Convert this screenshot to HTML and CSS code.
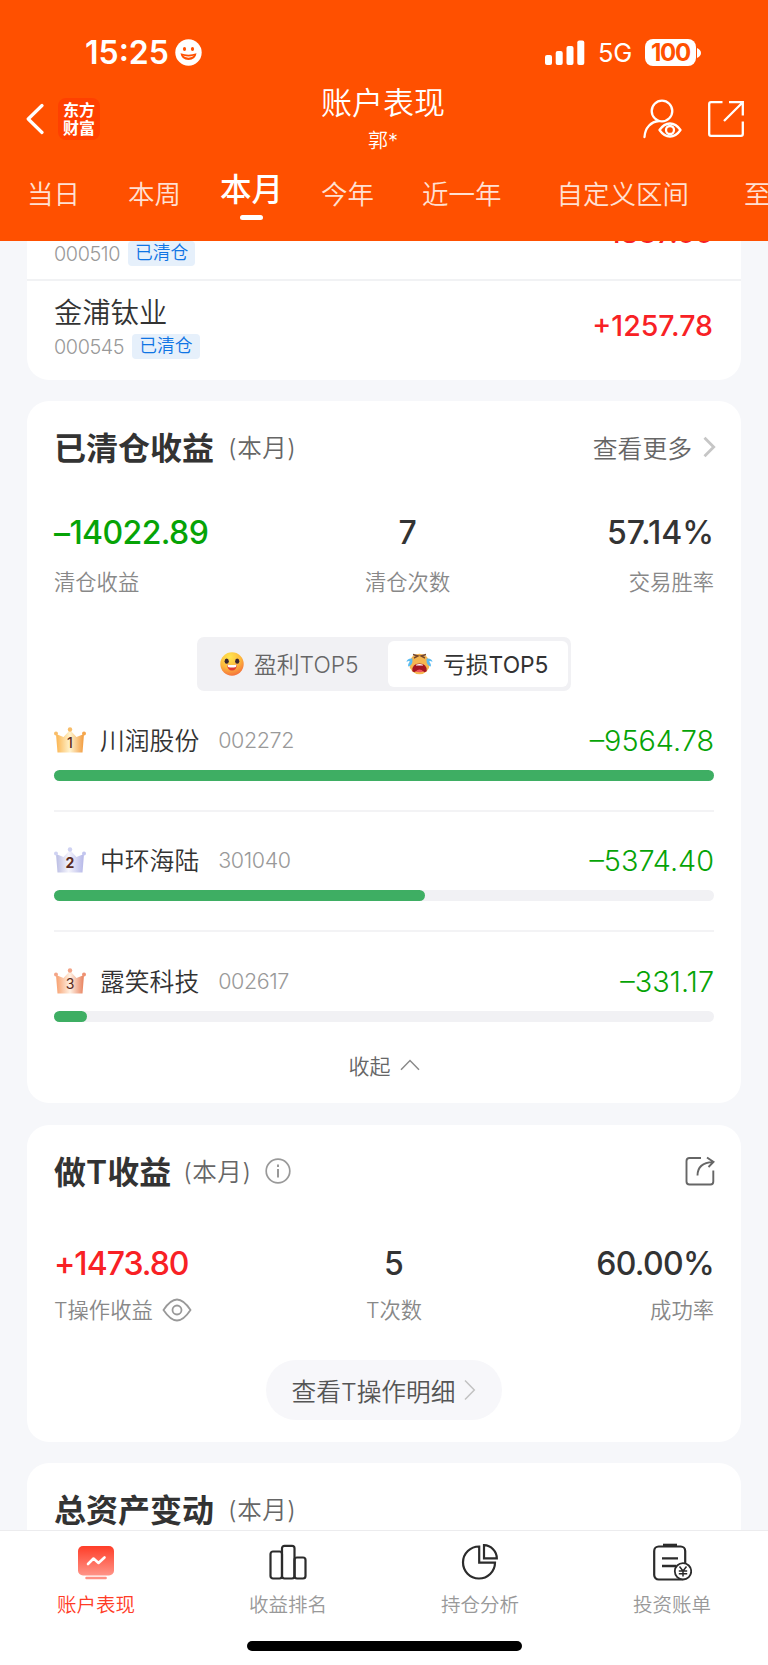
FILE: index.html
```html
<!DOCTYPE html>
<html lang="zh-CN">
<head>
    <meta charset="UTF-8">
    <meta name="viewport" content="width=device-width, initial-scale=1.0">
    <title>账户表现</title>
    <link rel="stylesheet" href="styles.css">
</head>
<body>

    <header class="header">
        <div class="status-bar">
            <div class="status-left">
                <span class="time">15:25</span>
                <svg width="27" height="27" viewBox="0 0 27 27">
                    <circle cx="13.5" cy="13.5" r="13.2" fill="#fff"/>
                    <ellipse cx="9.5" cy="10" rx="1.6" ry="2.1" fill="#ff5000"/>
                    <ellipse cx="17.5" cy="10" rx="1.6" ry="2.1" fill="#ff5000"/>
                    <path d="M5.5 14.3Q13.5 17 21.5 14.3Q20.5 21 13.5 21Q6.5 21 5.5 14.3Z" fill="#ff5000"/>
                    <path d="M8 16.6Q13.5 18.3 19 16.6Q17.5 18.7 13.5 18.7Q9.5 18.7 8 16.6Z" fill="#fff"/>
                </svg>
            </div>
            <div class="status-right">
                <svg width="40" height="26" viewBox="0 0 40 26" fill="#fff">
                    <rect x="0" y="15" width="7" height="10" rx="2"/>
                    <rect x="10.7" y="11" width="7" height="14" rx="2"/>
                    <rect x="21.5" y="6" width="7" height="19" rx="2"/>
                    <rect x="32.3" y="0.5" width="7" height="24.5" rx="2"/>
                </svg>
                <span class="network">5G</span>
                <span class="battery">100</span>
                <svg width="4" height="10" viewBox="0 0 4 10"><path d="M0 0Q4 2 4 5Q4 8 0 10Z" fill="#fff"/></svg>
            </div>
        </div>

        <div class="nav">
            <div class="nav-left">
                <svg width="18" height="32" viewBox="0 0 18 32" fill="none" stroke="#fff" stroke-width="3.2" stroke-linecap="round" stroke-linejoin="round"><path d="M16 2.5L2.2 16L16 29.5"/></svg>
                <span class="logo">东方<br>财富</span>
            </div>
            <div class="nav-title">
                <h1>账户表现</h1>
                <p>郭*</p>
            </div>
            <div class="nav-right">
                <svg width="40" height="40" viewBox="0 0 40 40" fill="none" stroke="#fff" stroke-width="2.3" stroke-linecap="round" stroke-linejoin="round">
                    <circle cx="20" cy="12" r="10.3"/>
                    <path d="M2.5 38C3 29 9 22.5 17 22"/>
                    <path d="M17.500 31Q22 24.500 28 24.500Q34 24.500 38.500 31Q34 37.500 28 37.500Q22 37.500 17.500 31Z"/>
                    <circle cx="28" cy="31" r="4"/>
                </svg>
                <svg width="38" height="38" viewBox="0 0 38 38" fill="none" stroke="#fff" stroke-width="2.3">
                    <path d="M15.500 2.200H4Q2.200 2.200 2.200 4V34Q2.200 35.800 4 35.800H34Q35.800 35.800 35.800 34V21.500"/>
                    <path d="M22 2.200H35.800V15.500M35.300 2.700L17 21"/>
                </svg>
            </div>
        </div>

        <nav class="tabs">
            <span>当日</span>
            <span>本周</span>
            <span class="active">本月</span>
            <span>今年</span>
            <span>近一年</span>
            <span class="wide">自定义区间</span>
            <span class="wide">至</span>
        </nav>
    </header>

    <main class="content">
        <section class="card stock-list">
            <div class="stock">
                <div>
                    <div class="stock-name"></div>
                    <div class="stock-meta"><span class="code">000510</span><span class="tag">已清仓</span></div>
                </div>
                <span class="stock-value">+1387.66</span>
            </div>
            <div class="stock last">
                <div>
                    <div class="stock-name">金浦钛业</div>
                    <div class="stock-meta"><span class="code">000545</span><span class="tag">已清仓</span></div>
                </div>
                <span class="stock-value">+1257.78</span>
            </div>
        </section>

        <section class="card cleared">
            <div class="card-head">
                <h2>已清仓收益</h2>
                <span class="period">(本月)</span>
                <a class="more">查看更多
                    <svg width="13" height="22" viewBox="0 0 13 22" fill="none" stroke="#c6c6c6" stroke-width="2.8"><path d="M1.5 1.8L10.7 11L1.5 20.2"/></svg>
                </a>
            </div>

            <div class="stats">
                <div class="stat"><b class="green">–14022.89</b><span>清仓收益</span></div>
                <div class="stat center"><b>7</b><span>清仓次数</span></div>
                <div class="stat right"><b>57.14%</b><span>交易胜率</span></div>
            </div>

            <div class="switch">
                <div class="switch-item">
                    <svg width="24" height="24" viewBox="0 0 24 24">
                        <defs>
                            <radialGradient id="face" cx="40%" cy="20%" r="85%"><stop offset="0" stop-color="#ffe650"/><stop offset=".55" stop-color="#fdb93c"/><stop offset="1" stop-color="#f4693c"/></radialGradient>
                        </defs>
                        <circle cx="12" cy="12" r="11.7" fill="url(#face)"/>
                        <ellipse cx="6.7" cy="9.2" rx="2.1" ry="2.6" fill="#3a2530"/>
                        <ellipse cx="17.2" cy="9.2" rx="2.1" ry="2.6" fill="#3a2530"/>
                        <path d="M7 12.5Q12 13.6 17 12.5Q16.5 18.5 12 18.5Q7.5 18.5 7 12.5Z" fill="#e23b32"/>
                        <path d="M7.4 12.5Q12 13.6 16.6 12.5L16 15Q12 16 8 15Z" fill="#fff"/>
                    </svg>
                    <span>盈利TOP5</span>
                </div>
                <div class="switch-item active">
                    <svg width="27" height="24" viewBox="0 0 27 24">
                        <circle cx="13.5" cy="12" r="10.3" fill="#f6b650"/>
                        <path d="M7 2.5L12 4L8 6M20 2.5L15 4L19 6" fill="none" stroke="#75462c" stroke-width="1.4"/>
                        <path d="M6.5 6.5Q1 6 0.5 10Q3 8.5 4 9.5Q1.5 12 2 14.5Q7 14 6.5 6.5Z" fill="#5bbcf2"/>
                        <path d="M20.5 6.5Q26 6 26.5 10Q24 8.5 23 9.5Q25.5 12 25 14.5Q20 14 20.5 6.5Z" fill="#5bbcf2"/>
                        <path d="M6.3 19Q6 11.5 13.5 11.5Q21 11.5 20.7 19Q19 21 17.5 19.5Q13.5 17.5 9.5 19.5Q8 21 6.3 19Z" fill="#a51621"/>
                        <path d="M9.5 19.5Q13.5 15.5 17.5 19.5Q13.5 21 9.5 19.5Z" fill="#ef5560"/>
                        <path d="M10 12.8Q13.5 11.300 17 12.800V13.600H10Z" fill="#fff"/>
                    </svg>
                    <span>亏损TOP5</span>
                </div>
            </div>

            <div class="rank">
                <div class="rank-row">
                    <svg class="crown" viewBox="0 0 32 26">
                        <defs><linearGradient id="gold"><stop offset="0" stop-color="#fbb450"/><stop offset=".5" stop-color="#fff3cd"/><stop offset="1" stop-color="#f29a3c"/></linearGradient></defs>
                        <path d="M2 7L9.5 10L16 3L22.5 10L30 7L28.5 25.5H3.5Z" fill="url(#gold)"/>
                        <circle cx="16" cy="2.5" r="2.2" fill="#f8bd69"/><circle cx="2" cy="6.5" r="2" fill="#f8bd69"/><circle cx="30" cy="6.5" r="2" fill="#f5a64c"/>
                        <text x="16" y="20.8" class="crown-num">1</text>
                    </svg>
                    <span class="rank-name">川润股份</span>
                    <span class="rank-code">002272</span>
                    <span class="rank-value">–9564.78</span>
                </div>
                <div class="bar"><i style="width: 100%"></i></div>
            </div>
            <div class="rank">
                <div class="rank-row">
                    <svg class="crown" viewBox="0 0 32 26">
                        <defs><linearGradient id="silver"><stop offset="0" stop-color="#b9bce3"/><stop offset=".45" stop-color="#f4f4fc"/><stop offset="1" stop-color="#b5b7e8"/></linearGradient></defs>
                        <path d="M2 7L9.5 10L16 3L22.5 10L30 7L28.5 25.5H3.5Z" fill="url(#silver)"/>
                        <circle cx="16" cy="2.5" r="2.2" fill="#cfd2f2"/><circle cx="2" cy="6.5" r="2" fill="#cfd2f2"/><circle cx="30" cy="6.5" r="2" fill="#c3c6ef"/>
                        <text x="16" y="20.8" class="crown-num bold">2</text>
                    </svg>
                    <span class="rank-name">中环海陆</span>
                    <span class="rank-code">301040</span>
                    <span class="rank-value">–5374.40</span>
                </div>
                <div class="bar"><i style="width: 56.2%"></i></div>
            </div>
            <div class="rank">
                <div class="rank-row">
                    <svg class="crown" viewBox="0 0 32 26">
                        <defs><linearGradient id="bronze"><stop offset="0" stop-color="#f7a06f"/><stop offset=".5" stop-color="#fff0e2"/><stop offset="1" stop-color="#e8805c"/></linearGradient></defs>
                        <path d="M2 7L9.5 10L16 3L22.5 10L30 7L28.5 25.5H3.5Z" fill="url(#bronze)"/>
                        <circle cx="16" cy="2.5" r="2.2" fill="#f3a588"/><circle cx="2" cy="6.5" r="2" fill="#f3a588"/><circle cx="30" cy="6.5" r="2" fill="#ee9273"/>
                        <text x="16" y="20.8" class="crown-num thin">3</text>
                    </svg>
                    <span class="rank-name">露笑科技</span>
                    <span class="rank-code">002617</span>
                    <span class="rank-value">–331.17</span>
                </div>
                <div class="bar"><i style="width: 5%"></i></div>
            </div>

            <div class="collapse">
                收起
                <svg width="20" height="12" viewBox="0 0 20 12" fill="none" stroke="#8a8a8a" stroke-width="1.5"><path d="M1 10.8L10 1.5L19 10.8"/></svg>
            </div>
        </section>

        <section class="card trade-t">
            <div class="card-head">
                <h2>做T收益</h2>
                <span class="period">(本月)</span>
                <svg class="info" width="26" height="26" viewBox="0 0 26 26" fill="none" stroke="#999" stroke-width="1.7">
                    <circle cx="13" cy="13" r="11.8"/>
                    <path d="M13 11V19.5M13 6.5V9" stroke-width="2"/>
                </svg>
                <svg class="share" width="30" height="30" viewBox="0 0 30 30" fill="none" stroke="#666" stroke-width="1.9">
                    <path d="M16 2H4.5Q1.5 2 1.5 5V25.5Q1.5 28.5 4.5 28.5H25.5Q28.3 28.5 28.3 25.5V14.5"/>
                    <path d="M12.5 19.5C12.5 11.5 17 6.5 28 6M22 1.5L28.5 6L23.5 11"/>
                </svg>
            </div>

            <div class="stats">
                <div class="stat"><b class="red">+1473.80</b><span>T操作收益
                    <svg width="30" height="24" viewBox="0 0 30 24" fill="none" stroke="#999" stroke-width="1.8"><path d="M1.5 12Q8.5 1.5 15 1.5Q21.5 1.5 28.5 12Q21.5 22.5 15 22.5Q8.5 22.5 1.5 12Z"/><circle cx="15" cy="12" r="4.5"/></svg></span></div>
                <div class="stat center"><b>5</b><span>T次数</span></div>
                <div class="stat right"><b class="rate">60.00%</b><span>成功率</span></div>
            </div>

            <div class="detail-btn">
                查看T操作明细
                <svg width="12" height="22" viewBox="0 0 12 22" fill="none" stroke="#c2c2c2" stroke-width="1.5"><path d="M1 1.5L10.3 11L1 20.5"/></svg>
            </div>
        </section>

        <section class="card assets">
            <div class="card-head">
                <h2>总资产变动</h2>
                <span class="period">(本月)</span>
            </div>
        </section>
    </main>

    <footer class="tabbar">
        <div class="tabbar-items">
            <div class="tabbar-item active">
                <svg width="40" height="40" viewBox="0 0 40 40">
                    <defs><linearGradient id="screen" x1="0" y1="0" x2="0" y2="1"><stop offset="0" stop-color="#ff3d28"/><stop offset="1" stop-color="#ff9488"/></linearGradient></defs>
                    <rect x="2" y="3" width="36" height="29.5" rx="5" fill="url(#screen)"/>
                    <rect x="9.3" y="33.7" width="21.5" height="2.6" rx="1" fill="#ff9085"/>
                    <path d="M12 21L17.5 15.5L22.5 20L28.5 14.5" fill="none" stroke="#fff" stroke-width="2.6" stroke-linecap="round" stroke-linejoin="round"/>
                </svg>
                <span>账户表现</span>
            </div>
            <div class="tabbar-item">
                <svg width="40" height="40" viewBox="0 0 40 40" fill="none" stroke="#2b2b2b" stroke-width="2.2">
                    <rect x="2.5" y="8.5" width="11.5" height="27" rx="2.5"/>
                    <rect x="14" y="2.8" width="12.5" height="32.7" rx="2.5"/>
                    <rect x="26.5" y="14.5" width="11" height="21" rx="2.5"/>
                </svg>
                <span>收益排名</span>
            </div>
            <div class="tabbar-item">
                <svg width="40" height="40" viewBox="0 0 40 40" fill="none" stroke="#2b2b2b" stroke-width="2.2">
                    <path d="M19.2 3.5A16 16 0 1 0 35 19.7H19.2Z"/>
                    <path d="M24 2.2A13.2 13.2 0 0 1 36.8 15.3H24Z"/>
                </svg>
                <span>持仓分析</span>
            </div>
            <div class="tabbar-item">
                <svg width="40" height="40" viewBox="0 0 40 40" fill="none" stroke="#2b2b2b" stroke-width="2.2">
                    <rect x="2.2" y="3.5" width="31" height="33" rx="4.5"/>
                    <path d="M11 2H25" stroke-width="2.6"/>
                    <path d="M10 15.3H26M10 23H24" stroke-width="2.3"/>
                    <circle cx="31" cy="28.3" r="8.2" fill="#fff" stroke-width="1.8"/>
                    <path d="M27.5 23.5L31 28L34.5 23.5M31 28V33.5M26.8 28H35.2M26.8 30.8H35.2" stroke-width="1.5"/>
                </svg>
                <span>投资账单</span>
            </div>
        </div>
        <div class="home-indicator"></div>
    </footer>

</body>
</html>
```
FILE: styles.css
```css
* {
    box-sizing: border-box;
}

body {
    margin: 0;
    height: 1665px;
    display: flex;
    flex-direction: column;
    overflow: hidden;
    font-family: Inter, "Noto Sans CJK SC", sans-serif;
    font-weight: 350;
    background: #f6f7fa;
    color: #333;
}

h1, h2, p {
    margin: 0;
}

svg {
    display: block;
    flex: none;
}

/* 顶部 */
.header {
    height: 241px;
    flex: none;
    background: #ff5000;
    color: #fff;
    position: relative;
    z-index: 1;
    overflow: hidden;
}

.status-bar {
    display: flex;
    justify-content: space-between;
    align-items: center;
    height: 80px;
    padding: 25px 67px 0 85px;
}

.status-left,
.status-right {
    display: flex;
    align-items: center;
}

.time {
    width: 90px;
    font-size: 32px;
    font-weight: 600;
    letter-spacing: 0;
}

.network {
    width: 60px;
    padding-left: 13px;
    font-size: 25.5px;
    font-weight: 400;
    letter-spacing: -0.3px;
}

.battery {
    width: 51px;
    height: 27px;
    margin-right: 1px;
    border-radius: 8px;
    background: #fff;
    color: #ff5000;
    font-size: 24px;
    font-weight: 700;
    line-height: 27px;
    letter-spacing: -1.2px;
    text-align: center;
}

.nav {
    display: grid;
    grid-template-columns: 1fr auto 1fr;
    height: 78px;
    padding: 0 23px 0 26px;
}

.nav-left {
    display: flex;
    align-items: center;
    height: 78px;
    gap: 14px;
}

.logo {
    width: 42px;
    height: 42px;
    padding-top: 3px;
    border-radius: 8px;
    background: #ff4000;
    font-size: 16px;
    font-weight: 700;
    line-height: 18px;
    text-align: center;
}

.nav-title {
    margin: 0 5px 0 0;
    text-align: center;
}

.nav-title h1 {
    font-size: 31px;
    font-weight: 350;
    line-height: 46px;
}

.nav-title p {
    font-size: 20px;
    font-weight: 350;
    line-height: 30px;
}

.nav-right {
    display: flex;
    justify-content: flex-end;
    align-items: center;
    height: 77px;
    gap: 25px;
}

.tabs {
    display: flex;
    height: 83px;
    padding: 16px 0 0 27px;
    font-size: 26.5px;
    line-height: 40px;
    white-space: nowrap;
    color: #ffe0d3;
}

.tabs span {
    margin-right: 48px;
}

.tabs .active {
    display: flex;
    flex-direction: column;
    align-items: center;
    margin: -4px 38px 0 -9px;
    font-size: 31.5px;
    font-weight: 500;
    color: #fff;
}

.tabs .active::after {
    content: "";
    width: 23px;
    height: 5px;
    margin-top: 5px;
    border-radius: 3px;
    background: #fff;
}

.tabs .wide {
    margin-left: 7px;
}

/* 内容区 */
.content {
    flex: 1;
    min-height: 0;
    padding: 0 27px;
    overflow: hidden;
}

.card {
    margin-bottom: 21px;
    padding: 0 27px;
    border-radius: 22px;
    background: #fff;
}

.stock-list {
    height: 192px;
    margin-top: -53px;
    padding: 0;
}

.stock {
    display: flex;
    justify-content: space-between;
    height: 93px;
    padding: 12px 28px 0 27px;
    border-bottom: 2px solid #f1f2f4;
}

.stock.last {
    height: 99px;
    border-bottom: 0;
}

.stock-name {
    height: 40px;
    font-size: 28.3px;
    line-height: 40px;
}

.stock-meta {
    display: flex;
    align-items: center;
    gap: 8px;
    margin-top: 1px;
}

.code {
    font-size: 19.8px;
    color: #999;
    letter-spacing: -0.4px;
}

.tag {
    height: 25px;
    padding: 0 7px;
    border-radius: 4px;
    background: #e6f0fb;
    color: #0f74e4;
    font-size: 17.8px;
    line-height: 24px;
}

.stock-value {
    font-size: 28.5px;
    font-weight: 500;
    line-height: 66px;
    color: #f82125;
}

.cleared {
    height: 702px;
    margin-bottom: 22px;
}

.trade-t {
    height: 317px;
}

.assets {
    height: 200px;
}

.card-head {
    display: flex;
    align-items: center;
    height: 94px;
}

.card-head h2 {
    margin-top: -4px;
    font-size: 32px;
    font-weight: 600;
}

.period {
    margin: -3px 0 0 14px;
    font-size: 24.5px;
    letter-spacing: 0.6px;
    color: #666;
}

.more {
    display: flex;
    align-items: center;
    gap: 11px;
    margin: -2px -2px 0 auto;
    font-size: 24.8px;
    color: #666;
}

.trade-t .period {
    margin-left: 12px;
}

.info {
    margin: -2px 0 0 13px;
}

.share {
    margin: -2px -1px 0 auto;
}

.stats {
    display: flex;
    justify-content: space-between;
    padding-top: 18px;
}

.stat b {
    display: block;
    font-size: 32px;
    font-weight: 550;
    line-height: 40px;
}

.stat span {
    display: flex;
    align-items: center;
    gap: 9px;
    margin-top: 14px;
    font-size: 21.3px;
    line-height: 30px;
    color: #888;
}

.stat.center {
    text-align: center;
}

.stat.right {
    text-align: right;
}

.stat.right span {
    justify-content: flex-end;
}

.stat .green {
    color: #06a306;
    letter-spacing: -0.6px;
}

.stat .red {
    color: #f82125;
    letter-spacing: -1px;
}

.stat .rate {
    letter-spacing: -0.7px;
}

.trade-t .stats {
    padding-top: 25px;
}

.trade-t .stat span {
    margin-top: 11px;
}

.switch {
    display: flex;
    width: 374px;
    height: 54px;
    margin: 40px auto 0;
    padding: 4px 3px;
    border-radius: 7px;
    background: #f1f1f4;
    font-size: 22.8px;
    color: #666;
}

.switch-item {
    display: flex;
    align-items: center;
    width: 188px;
    padding-left: 20px;
    gap: 10px;
}

.switch-item span {
    margin-top: -2px;
}

.switch-item.active {
    width: 180px;
    padding-left: 18px;
    border-radius: 6px;
    background: #fff;
    font-weight: 400;
    color: #333;
}

.rank {
    height: 121px;
    padding-top: 30px;
    border-bottom: 2px solid #f3f3f5;
}

.switch + .rank {
    padding-top: 29px;
    height: 121px;
}

.switch + .rank + .rank {
    padding-top: 28px;
    height: 120px;
}

.rank:nth-last-child(2) {
    height: 90px;
    padding-top: 29px;
    border-bottom: 0;
}

.rank-row {
    display: flex;
    align-items: center;
    height: 40px;
}

.crown {
    width: 32px;
    height: 26px;
}

.crown-num {
    font-size: 14px;
    font-weight: 500;
    text-anchor: middle;
    fill: #5b2a20;
}

.crown-num.bold {
    font-weight: 700;
}

.crown-num.thin {
    font-weight: 400;
}

.rank-name {
    margin: -2px 0 0 14px;
    font-size: 24.8px;
}

.rank-code {
    margin-left: 19px;
    font-size: 21.5px;
    color: #999;
    letter-spacing: -0.4px;
}

.rank-value {
    margin-left: auto;
    font-size: 28.8px;
    color: #06a306;
}

.bar {
    height: 11px;
    margin-top: 10px;
    border-radius: 6px;
    background: #f1f1f4;
}

.bar i {
    display: block;
    height: 11px;
    border-radius: 6px;
    background: #3eae63;
}

.collapse {
    display: flex;
    justify-content: center;
    align-items: center;
    gap: 9px;
    height: 70px;
    padding-top: 15px;
    font-size: 21px;
    color: #666;
}

.detail-btn {
    display: flex;
    justify-content: center;
    align-items: center;
    gap: 9px;
    width: 236px;
    height: 60px;
    margin: 35px auto 0;
    border-radius: 30px;
    background: #f7f7fa;
    font-size: 24.7px;
    color: #555;
}

/* 底部导航 */
.tabbar {
    height: 135px;
    flex: none;
    border-top: 1px solid #ececee;
    background: #fff;
}

.tabbar-items {
    display: grid;
    grid-template-columns: repeat(4, 1fr);
    height: 110px;
    padding-top: 12px;
}

.tabbar-item {
    display: flex;
    flex-direction: column;
    align-items: center;
    font-size: 19.5px;
    line-height: 28px;
    color: #999;
}

.tabbar-item span {
    margin-top: 8px;
}

.tabbar-item.active {
    color: #ff3b26;
}

.home-indicator {
    width: 275px;
    height: 10px;
    margin: 0 auto;
    border-radius: 5px;
    background: #000;
}
```
